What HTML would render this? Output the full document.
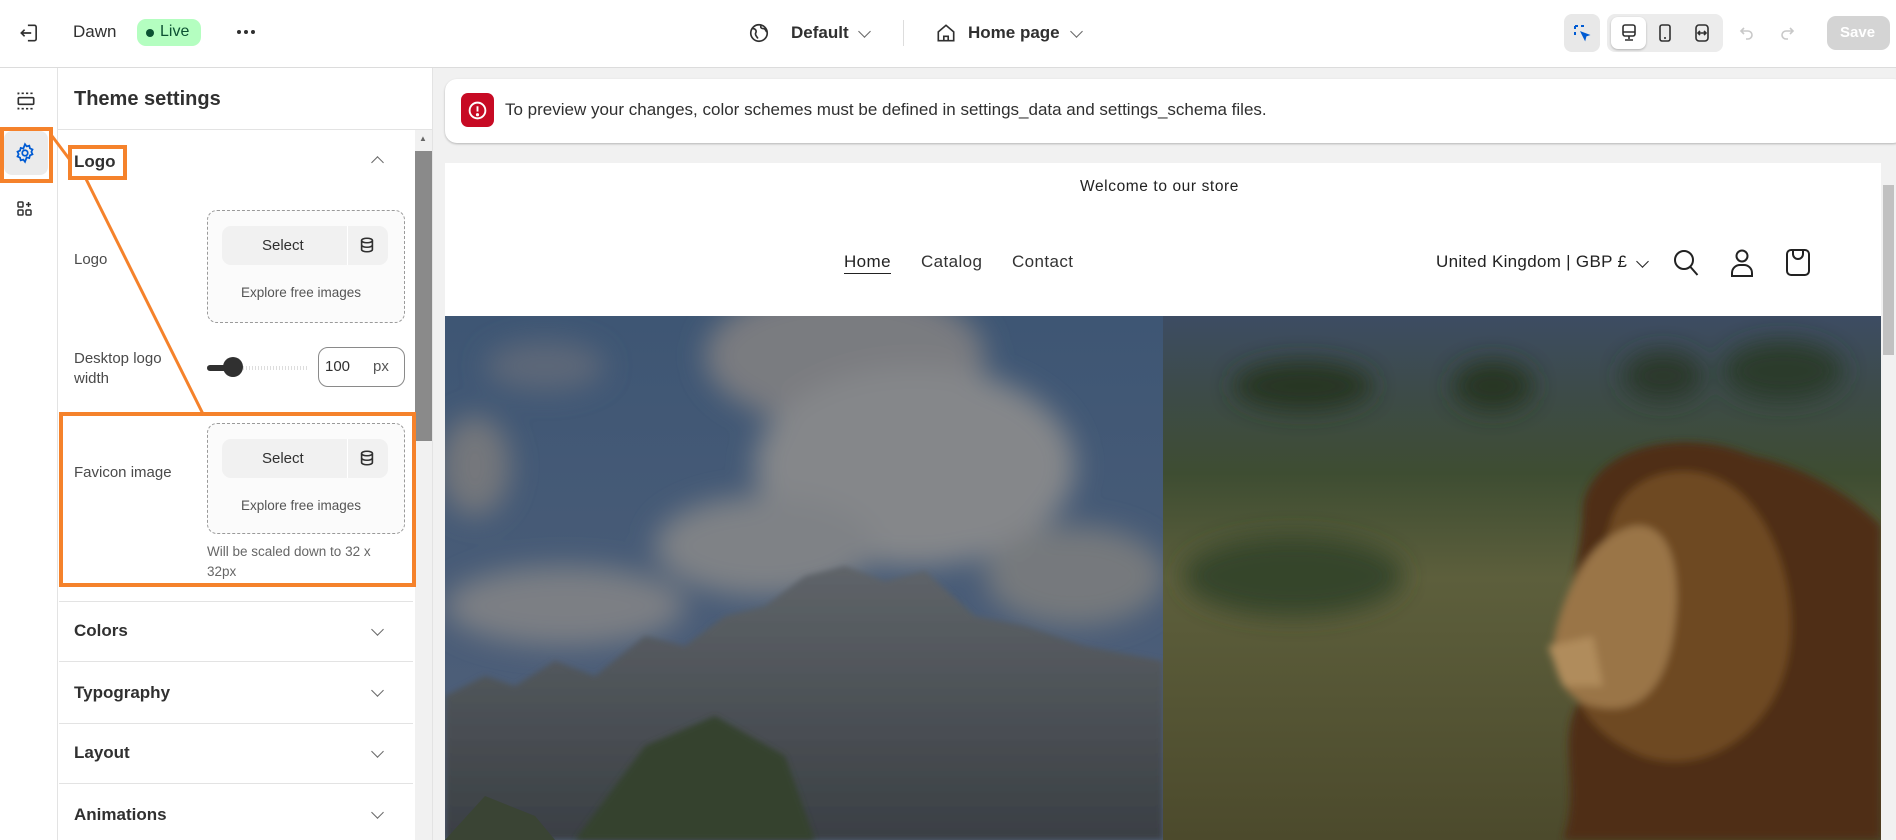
<!DOCTYPE html>
<html><head><meta charset="utf-8"><style>
*{box-sizing:border-box;margin:0;padding:0}
body{width:1896px;height:840px;overflow:hidden;font-family:"Liberation Sans",sans-serif;background:#f1f1f1;position:relative;color:#303030}
.abs{position:absolute}
.top{left:0;top:0;width:1896px;height:68px;background:#fff;border-bottom:1px solid #dcdcdc}
.t{position:absolute;white-space:nowrap}
.rail{left:0;top:68px;width:58px;height:772px;background:#fff;border-right:1px solid #e3e3e3}
.side{left:58px;top:68px;width:375px;height:772px;background:#fff;border-right:1px solid #e3e3e3}
.up{position:absolute;border:1px dashed #9a9a9a;border-radius:10px;background:#fbfbfb}
.sel{position:absolute;background:#f1f1f1;border-radius:9px}
.sec{position:absolute;left:59px;width:354px;border-top:1px solid #e3e3e3}
.chev{position:absolute;width:9px;height:9px;border-right:1.6px solid #666;border-bottom:1.6px solid #666;transform:rotate(45deg)}
.o{position:absolute;border:4px solid #f5822b}
</style></head><body>
<div class="abs top">
  <svg class="abs" style="left:18px;top:22px" width="22" height="22" viewBox="0 0 20 20" fill="none" stroke="#303030" stroke-width="1.5"><path d="M9 3h6a1.5 1.5 0 0 1 1.5 1.5v11A1.5 1.5 0 0 1 15 17H9"/><path d="M3 10h9M6 7l-3 3 3 3"/></svg>
  <div class="t" style="left:73px;top:22px;font-size:17px">Dawn</div>
  <div class="abs" style="left:137px;top:19px;width:64px;height:27px;border-radius:9px;background:#b4fec0"></div>
  <div class="abs" style="left:146px;top:29px;width:8px;height:8px;border-radius:50%;background:#0c5132"></div>
  <div class="t" style="left:160px;top:23px;font-size:16px;color:#0c5132">Live</div>
  <svg class="abs" style="left:236px;top:28px" width="20" height="8"><circle cx="3" cy="4" r="2" fill="#303030"/><circle cx="10" cy="4" r="2" fill="#303030"/><circle cx="17" cy="4" r="2" fill="#303030"/></svg>
  <svg class="abs" style="left:748px;top:22px" width="22" height="22" viewBox="0 0 20 20" fill="none" stroke="#303030" stroke-width="1.5"><circle cx="10" cy="10" r="7.5"/><path d="M4 6c3 0 4 2 3 4s1 3 2 5M12 3c-1 2 0 3 2 3s2 2 3 3"/></svg>
  <div class="t" style="left:791px;top:23px;font-size:17px;font-weight:bold">Default</div>
  <div class="chev" style="left:860px;top:27px"></div>
  <div class="abs" style="left:903px;top:20px;width:1px;height:26px;background:#ddd"></div>
  <svg class="abs" style="left:935px;top:22px" width="22" height="22" viewBox="0 0 20 20" fill="none" stroke="#303030" stroke-width="1.5"><path d="M3 9l7-6 7 6v8H3z"/><path d="M8 17v-4h4v4"/></svg>
  <div class="t" style="left:968px;top:23px;font-size:17px;font-weight:bold">Home page</div>
  <div class="chev" style="left:1072px;top:27px"></div>
  <div class="abs" style="left:1564px;top:14px;width:36px;height:38px;border-radius:8px;background:#e8e8e8"></div>
  <svg class="abs" style="left:1572px;top:23px" width="20" height="20" viewBox="0 0 20 20" fill="none" stroke="#005bd3" stroke-width="2" stroke-dasharray="3 3"><path d="M3 3h12M3 3v12"/><path d="M9 9l8 3-3 1-1 4z" fill="#005bd3" stroke-dasharray="none" stroke-width="1"/></svg>
  <div class="abs" style="left:1607px;top:14px;width:116px;height:38px;border-radius:8px;background:#ececec"></div>
  <div class="abs" style="left:1611px;top:17px;width:35px;height:32px;border-radius:7px;background:#fff;box-shadow:0 1px 2px rgba(0,0,0,.25)"></div>
  <svg class="abs" style="left:1619px;top:23px" width="20" height="20" viewBox="0 0 20 20" fill="none" stroke="#303030" stroke-width="1.6"><rect x="4" y="2" width="12" height="11" rx="2"/><path d="M4 9h12M10 13v3M6 17h8"/></svg>
  <svg class="abs" style="left:1655px;top:23px" width="20" height="20" viewBox="0 0 20 20" fill="none" stroke="#303030" stroke-width="1.6"><rect x="5" y="2" width="10" height="16" rx="2"/><path d="M9 15h2"/></svg>
  <svg class="abs" style="left:1692px;top:23px" width="20" height="20" viewBox="0 0 20 20" fill="none" stroke="#303030" stroke-width="1.6"><rect x="4" y="2" width="12" height="16" rx="3"/><path d="M6 10h8M8 8l-2 2 2 2M12 8l2 2-2 2"/></svg>
  <svg class="abs" style="left:1737px;top:23px" width="20" height="20" viewBox="0 0 20 20" fill="none" stroke="#c8c8c8" stroke-width="1.6"><path d="M7 5L4 8l3 3M4 8h7a4 4 0 0 1 0 8H9"/></svg>
  <svg class="abs" style="left:1777px;top:23px" width="20" height="20" viewBox="0 0 20 20" fill="none" stroke="#c8c8c8" stroke-width="1.6"><path d="M13 5l3 3-3 3M16 8H9a4 4 0 0 0 0 8h2"/></svg>
  <div class="abs" style="left:1827px;top:16px;width:63px;height:34px;border-radius:9px;background:#d4d4d4"></div>
  <div class="t" style="left:1840px;top:24px;font-size:15px;font-weight:bold;color:#fff">Save</div>
</div>

<div class="abs rail">
  <svg class="abs" style="left:15px;top:22px" width="22" height="22" viewBox="0 0 20 20" fill="none" stroke="#303030" stroke-width="1.5"><rect x="3" y="7" width="14" height="6" rx="1"/><path d="M3 4V3h14v1M3 16v1h14v-1" stroke-dasharray="2 2"/></svg>
  <div class="abs" style="left:4px;top:63px;width:44px;height:44px;border-radius:8px;background:#ebebeb"></div>
  <svg class="abs" style="left:14px;top:74px" width="22" height="22" viewBox="0 0 20 20" fill="none" stroke="#005bd3" stroke-width="1.6"><circle cx="10" cy="10" r="2.5"/><path d="M10 2l1.5 2 2.4-.6.6 2.4 2.3 1-1 2.2 1 2.2-2.3 1-.6 2.4-2.4-.6L10 18l-1.5-2-2.4.6-.6-2.4-2.3-1 1-2.2-1-2.2 2.3-1 .6-2.4 2.4.6z"/></svg>
  <svg class="abs" style="left:15px;top:131px" width="20" height="20" viewBox="0 0 20 20" fill="none" stroke="#303030" stroke-width="1.5"><rect x="3" y="3" width="5" height="5" rx="1"/><rect x="3" y="11" width="5" height="5" rx="1"/><rect x="11" y="11" width="5" height="5" rx="1"/><path d="M13.5 3v5M11 5.5h5"/></svg>
</div>

<div class="abs side">
  <div class="t" style="left:16px;top:20px;font-size:20px;font-weight:bold;color:#303030">Theme settings</div>
  <div class="abs" style="left:0;top:61px;width:375px;height:1px;background:#e3e3e3"></div>
  <div class="abs" style="left:357px;top:62px;width:17px;height:710px;background:#f1f1f1"></div>
  <div class="abs" style="left:357px;top:83px;width:17px;height:290px;background:#8a8a8a"></div>
  <div class="t" style="left:361px;top:66px;font-size:8px;color:#666">▲</div>
</div>
<div class="t" style="left:74px;top:152px;font-size:17px;font-weight:bold">Logo</div>
<div class="chev" style="left:373px;top:158px;transform:rotate(225deg)"></div>
<div class="t" style="left:74px;top:251px;font-size:15px;color:#4a4a4a">Logo</div>
<div class="up" style="left:207px;top:210px;width:198px;height:113px"></div>
<div class="sel" style="left:222px;top:226px;width:166px;height:39px"></div>
<div class="abs" style="left:347px;top:226px;width:1px;height:39px;background:#fff"></div>
<div class="t" style="left:262px;top:237px;font-size:15px;color:#303030">Select</div>
<svg class="abs" style="left:358px;top:236px" width="18" height="18" viewBox="0 0 20 20" fill="none" stroke="#303030" stroke-width="1.8"><ellipse cx="10" cy="5" rx="6" ry="2.5"/><path d="M4 5v10c0 1.4 2.7 2.5 6 2.5s6-1.1 6-2.5V5M4 10c0 1.4 2.7 2.5 6 2.5s6-1.1 6-2.5"/></svg>
<div class="t" style="left:241px;top:285px;font-size:13.5px;color:#555">Explore free images</div>
<div class="t" style="left:74px;top:349px;font-size:15px;color:#4a4a4a;line-height:20px">Desktop logo<br>width</div>
<div class="abs" style="left:207px;top:366px;width:100px;height:4px;background:repeating-linear-gradient(90deg,#ddd 0 1px,#fff 1px 3px)"></div>
<div class="abs" style="left:207px;top:365px;width:24px;height:6px;background:#303030;border-radius:3px"></div>
<div class="abs" style="left:223px;top:357px;width:20px;height:20px;border-radius:50%;background:#303030"></div>
<div class="abs" style="left:318px;top:347px;width:87px;height:40px;border:1px solid #8a8a8a;border-radius:10px;background:#fff"></div>
<div class="t" style="left:325px;top:358px;font-size:15px">100</div>
<div class="t" style="left:373px;top:358px;font-size:15px;color:#555">px</div>

<div class="t" style="left:74px;top:464px;font-size:15px;color:#4a4a4a">Favicon image</div>
<div class="up" style="left:207px;top:423px;width:198px;height:111px"></div>
<div class="sel" style="left:222px;top:439px;width:166px;height:39px"></div>
<div class="abs" style="left:347px;top:439px;width:1px;height:39px;background:#fff"></div>
<div class="t" style="left:262px;top:450px;font-size:15px;color:#303030">Select</div>
<svg class="abs" style="left:358px;top:449px" width="18" height="18" viewBox="0 0 20 20" fill="none" stroke="#303030" stroke-width="1.8"><ellipse cx="10" cy="5" rx="6" ry="2.5"/><path d="M4 5v10c0 1.4 2.7 2.5 6 2.5s6-1.1 6-2.5V5M4 10c0 1.4 2.7 2.5 6 2.5s6-1.1 6-2.5"/></svg>
<div class="t" style="left:241px;top:498px;font-size:13.5px;color:#555">Explore free images</div>
<div class="t" style="left:207px;top:542px;font-size:13.5px;color:#666;line-height:20px">Will be scaled down to 32 x<br>32px</div>

<div class="sec" style="top:601px"></div>
<div class="t" style="left:74px;top:621px;font-size:17px;font-weight:bold">Colors</div>
<div class="chev" style="left:373px;top:625px"></div>
<div class="sec" style="top:661px"></div>
<div class="t" style="left:74px;top:683px;font-size:17px;font-weight:bold">Typography</div>
<div class="chev" style="left:373px;top:686px"></div>
<div class="sec" style="top:723px"></div>
<div class="t" style="left:74px;top:743px;font-size:17px;font-weight:bold">Layout</div>
<div class="chev" style="left:373px;top:747px"></div>
<div class="sec" style="top:783px"></div>
<div class="t" style="left:74px;top:805px;font-size:17px;font-weight:bold">Animations</div>
<div class="chev" style="left:373px;top:808px"></div>

<!-- preview -->
<div class="abs" style="left:445px;top:79px;width:1460px;height:64px;background:#fff;border-radius:12px;box-shadow:0 1px 2px rgba(0,0,0,.25)"></div>
<div class="abs" style="left:461px;top:93px;width:33px;height:34px;border-radius:7px;background:#c70a24"></div>
<svg class="abs" style="left:467px;top:100px" width="21" height="21" viewBox="0 0 20 20" fill="none" stroke="#fff" stroke-width="1.8"><circle cx="10" cy="10" r="7.5"/><path d="M10 6v5"/><circle cx="10" cy="14" r=".6" fill="#fff"/></svg>
<div class="t" style="left:505px;top:100px;font-size:17px;color:#303030">To preview your changes, color schemes must be defined in settings_data and settings_schema files.</div>

<div class="abs" style="left:445px;top:163px;width:1436px;height:677px;background:#fff"></div>
<div class="abs" style="left:1881px;top:163px;width:15px;height:677px;background:#f1f1f1"></div>
<div class="abs" style="left:1883px;top:185px;width:11px;height:170px;background:#c1c1c1"></div>
<div class="t" style="left:1080px;top:178px;font-size:15.5px;letter-spacing:.6px;color:#222">Welcome to our store</div>
<div class="t" style="left:844px;top:252px;font-size:17px;letter-spacing:.4px;color:#222;border-bottom:1px solid #222;padding-bottom:1px">Home</div>
<div class="t" style="left:921px;top:252px;font-size:17px;letter-spacing:.4px;color:#333">Catalog</div>
<div class="t" style="left:1012px;top:252px;font-size:17px;letter-spacing:.4px;color:#333">Contact</div>
<div class="t" style="left:1436px;top:252px;font-size:17px;letter-spacing:.3px;color:#222">United Kingdom | GBP £</div>
<div class="chev" style="left:1638px;top:257px;border-color:#222"></div>
<svg class="abs" style="left:1672px;top:248px" width="28" height="30" viewBox="0 0 28 30" fill="none" stroke="#222" stroke-width="2"><circle cx="12" cy="12" r="9"/><path d="M18.5 19l7 8"/></svg>
<svg class="abs" style="left:1729px;top:248px" width="26" height="30" viewBox="0 0 26 30" fill="none" stroke="#222" stroke-width="2"><circle cx="13" cy="8" r="5.5"/><path d="M3 28v-3a8 8 0 0 1 8-8h4a8 8 0 0 1 8 8v3z"/></svg>
<svg class="abs" style="left:1785px;top:247px" width="26" height="30" viewBox="0 0 26 30" fill="none" stroke="#222" stroke-width="2"><rect x="2" y="3" width="22" height="25" rx="4"/><path d="M8 3v4a5 5 0 0 0 10 0V3"/></svg>

<svg class="abs" style="left:445px;top:316px" width="718" height="524" viewBox="0 0 718 524">
<defs><linearGradient id="sky" x1="0" y1="0" x2="0" y2="1"><stop offset="0" stop-color="#3e5674"/><stop offset="1" stop-color="#52617a"/></linearGradient>
<linearGradient id="mt" x1="0" y1="0" x2="0" y2="1"><stop offset="0" stop-color="#5f6469"/><stop offset="1" stop-color="#3a3f44"/></linearGradient>
<filter id="b1" x="-20%" y="-20%" width="140%" height="140%"><feGaussianBlur stdDeviation="14"/></filter>
<filter id="b2"><feGaussianBlur stdDeviation="3"/></filter></defs>
<rect width="718" height="524" fill="url(#sky)"/>
<g filter="url(#b1)">
<ellipse cx="400" cy="40" rx="140" ry="70" fill="#7a7c80"/>
<ellipse cx="470" cy="150" rx="160" ry="100" fill="#85878a"/>
<ellipse cx="320" cy="230" rx="110" ry="50" fill="#7f8286"/>
<ellipse cx="120" cy="290" rx="120" ry="40" fill="#7c7f84"/>
<ellipse cx="30" cy="150" rx="35" ry="50" fill="#74777c"/>
<ellipse cx="630" cy="260" rx="90" ry="50" fill="#76797d"/>
<ellipse cx="100" cy="50" rx="60" ry="25" fill="#5d6778"/>
</g>
<path d="M0 380 L40 360 L70 370 L110 345 L150 360 L200 320 L240 330 L280 300 L320 290 L360 260 L400 250 L440 265 L480 255 L530 300 L580 310 L640 330 L718 345 L718 524 L0 524Z" fill="url(#mt)" filter="url(#b2)"/>
<path d="M130 524 L200 430 L270 400 L340 440 L370 524Z" fill="#35432f" filter="url(#b2)"/>
<path d="M0 524 L40 480 L90 500 L110 524Z" fill="#3a4434"/>
</svg>
<svg class="abs" style="left:1163px;top:316px" width="718" height="524" viewBox="0 0 718 524">
<defs><linearGradient id="gr" x1="0" y1="0" x2="0" y2="1"><stop offset="0" stop-color="#3d4c63"/><stop offset=".15" stop-color="#3d4b48"/><stop offset=".3" stop-color="#3e4d32"/><stop offset=".5" stop-color="#5d5f3c"/><stop offset="1" stop-color="#4c4a2c"/></linearGradient>
<filter id="b3" x="-20%" y="-20%" width="140%" height="140%"><feGaussianBlur stdDeviation="12"/></filter>
<filter id="b4"><feGaussianBlur stdDeviation="4"/></filter></defs>
<rect width="718" height="524" fill="url(#gr)"/>
<g filter="url(#b3)">
<ellipse cx="140" cy="70" rx="70" ry="25" fill="#263424"/>
<ellipse cx="330" cy="70" rx="40" ry="25" fill="#263424"/>
<ellipse cx="500" cy="60" rx="40" ry="25" fill="#29382a"/>
<ellipse cx="620" cy="55" rx="60" ry="30" fill="#2a3a2c"/>
<ellipse cx="130" cy="260" rx="110" ry="40" fill="#34452c"/>
</g>
<g filter="url(#b4)">
<path d="M420 190 C430 130 520 110 590 140 C640 150 690 180 718 210 L718 524 L400 524 C420 470 390 420 420 380 C380 330 420 260 420 190Z" fill="#4f2e15"/>
<path d="M450 200 C470 150 540 140 580 180 C620 220 640 300 620 360 C600 420 540 460 480 440 C430 420 400 380 410 330 Z" fill="#6e4820"/>
<path d="M390 330 C400 270 430 220 470 210 C510 205 520 260 510 320 C500 380 470 400 430 390 C405 385 390 360 390 330Z" fill="#9a7446"/>
<path d="M385 330 L430 320 L440 370 L400 370Z" fill="#b08c5c"/>
</g>
</svg>

<!-- orange annotations -->
<div class="o" style="left:0;top:127px;width:53px;height:56px"></div>
<div class="o" style="left:68px;top:145px;width:59px;height:35px"></div>
<div class="o" style="left:59px;top:412px;width:357px;height:175px"></div>
<svg class="abs" style="left:0;top:0" width="450" height="450" fill="none" stroke="#f5822b" stroke-width="3"><path d="M52 136 L70 160"/><path d="M86 179 L203 414"/></svg>
</body></html>
